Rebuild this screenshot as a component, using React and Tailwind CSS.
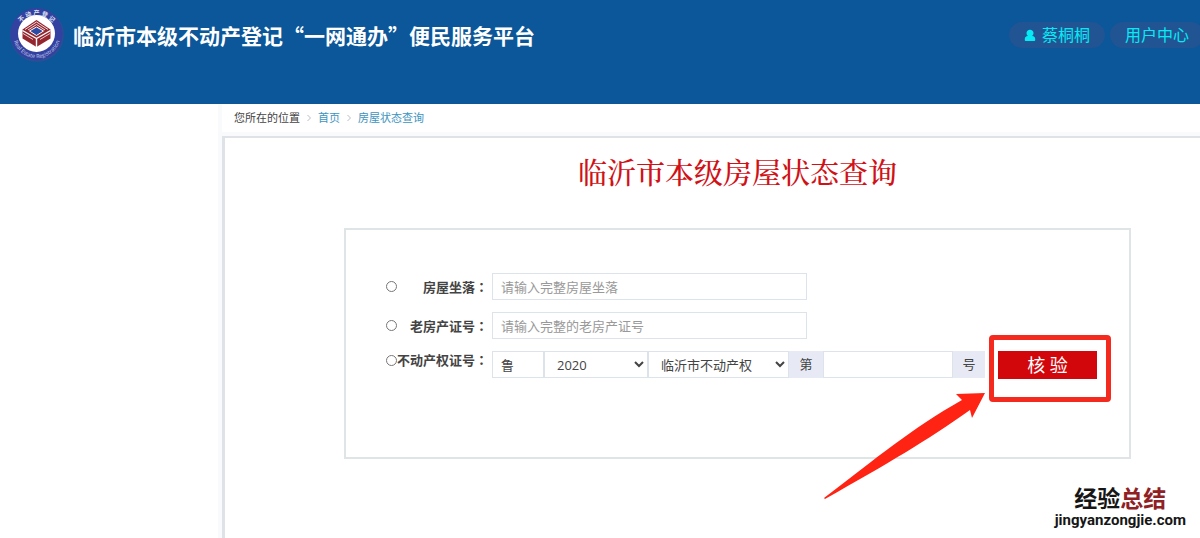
import React from "react";

function Emblem() {
  return (
    <svg viewBox="0 0 56 56" className="size-14 shrink-0" role="img" aria-label="不动产登记">
      <defs>
        <path id="arcTop" d="M7.5 28 A20 20 0 0 1 47.5 28" />
        <path id="arcBottom" d="M3.800 27 A24 24 0 0 0 51.800 27" />
      </defs>
      <circle cx="28" cy="28" r="27" fill="#2a4f96" />
      <circle cx="27.500" cy="27" r="26" fill="#3341a0" />
      <circle cx="27.500" cy="26.500" r="18.500" fill="#fff" />
      <text fontSize="6" fontWeight="700" fill="#dfe3f5" textAnchor="middle">
        <textPath href="#arcTop" startOffset="50%">不 动 产 登 记</textPath>
      </text>
      <text fontSize="5.500" fill="#c3cbea" textAnchor="middle">
        <textPath href="#arcBottom" startOffset="50%">Real Estate Registration</textPath>
      </text>
      <path d="M27.500 13 41.500 22.500 V31.500 L27.500 40 13.500 31.500 V22.500Z" fill="#94262f" />
      <path d="M13.500 23.500 27.500 31.500 41.500 23.500 M27.500 31.500 V40" stroke="#fff" strokeWidth="1.400" fill="none" />
      <path d="M14 26.500 24 32.500 M41 26.500 31 32.500" stroke="#e9c9cc" strokeWidth="1" />
      <path d="M16 22.500 27.500 15 39 22.500 M19 23 27.500 17.500 36 23" stroke="#f1dcdd" strokeWidth="1" fill="none" />
      <path d="M20.500 24 27.500 20 34.500 24 27.500 28.500Z" fill="#2b4ba5" stroke="#fff" strokeWidth="1" />
    </svg>
  );
}

function UserIcon() {
  return (
    <svg viewBox="0 0 12 13" className="h-[13px] w-3" fill="currentColor" aria-hidden="true">
      <path d="M6 .8c2 0 3.500 1.300 3.500 3.200C9.500 5.300 8.900 6.300 8.200 6.900 10.300 7 11.200 8.200 11.200 10v.9c0 .7-.5 1.100-1.200 1.100H2C1.300 12 .8 11.600 .8 10.900V10c0-1.800.9-3 3-3.100C3.100 6.300 2.500 5.300 2.500 4 2.500 2.100 4 .8 6 .8Z" />
    </svg>
  );
}

function Crumb() {
  return (
    <svg viewBox="0 0 4 8" className="h-2 w-1" fill="none" stroke="#b9bec4" aria-hidden="true">
      <path d="M.5 1 3.500 4 .5 7" />
    </svg>
  );
}

const field =
  "h-[27px] min-w-0 border border-[#dde3ea] bg-white text-[13px] text-[#444] outline-none placeholder:text-[#999]";

function Choice({ id, text }) {
  return (
    <div className="flex w-[102px] shrink-0 items-center justify-between">
      <input id={id} type="radio" name="kind" className="-mr-1 size-[11px] shrink-0" />
      <label htmlFor={id} className="text-[13px] leading-[18px] font-bold whitespace-nowrap text-[#444]">
        {text}
        <span className="font-['Noto_Sans_CJK_TC',sans-serif]" lang="zh-TW">：</span>
      </label>
    </div>
  );
}

function SearchRow({ id, text, hint }) {
  return (
    <div className="flex items-center gap-1">
      <Choice id={id} text={text} />
      <input type="text" aria-label={text} placeholder={hint} className={`${field} w-[315px] px-2`} />
    </div>
  );
}

export default function App() {
  return (
    <div className="flex min-h-screen flex-col overflow-x-hidden bg-white font-['Open_Sans','Noto_Sans_CJK_SC',sans-serif]">
      <header className="flex h-[104px] items-start justify-between bg-[#0b5799]">
        <div className="flex items-center gap-2 pt-[7px] pl-[9px]">
          <Emblem />
          <h1 className="font-['Noto_Sans_CJK_SC',sans-serif] text-[21px] leading-7 font-bold whitespace-nowrap text-white">
            临沂市本级不动产登记“一网通办”便民服务平台
          </h1>
        </div>
        <nav className="-mr-1 flex gap-[5px] pt-[22px] text-base leading-[26px] whitespace-nowrap text-[#06eaf5]">
          <a href="#user" className="flex items-center gap-1.5 rounded-full bg-[#215493] px-[15px]">
            <UserIcon />
            蔡桐桐
          </a>
          <a href="#center" className="rounded-full bg-[#215493] px-[15px]">
            用户中心
          </a>
        </nav>
      </header>

      <div className="flex flex-1">
        <aside className="w-[218px] shrink-0" />
        <div className="flex min-w-0 flex-1 flex-col bg-[#f8fafc] pl-1">
          <nav className="mb-1 flex h-7 items-center gap-[7px] bg-white pl-3 text-[11px] text-[#444]">
            <span>您所在的位置</span>
            <Crumb />
            <a href="#home" className="text-[#3d94c0]">首页</a>
            <Crumb />
            <a href="#query" className="text-[#3d94c0]">房屋状态查询</a>
          </nav>

          <main className="relative flex-1 border-t-2 border-l-[3px] border-[#dfe3e8] bg-white pr-[69px] pl-[119px]">
            <h2 className="pt-3.5 text-center font-['Noto_Serif_CJK_SC','Noto_Sans_CJK_SC',serif] text-[29px] leading-10 font-medium text-[#d01217]">
              临沂市本级房屋状态查询
            </h2>
            <form className="mt-9 flex flex-col gap-3 border-2 border-[#dfe4e6] pt-[43px] pr-8 pb-[78px] pl-10">
              <SearchRow id="seat" text="房屋坐落" hint="请输入完整房屋坐落" />
              <SearchRow id="old" text="老房产证号" hint="请输入完整的老房产证号" />
              <div className="flex items-start gap-1">
                <Choice id="cert" text="不动产权证号" />
                <div className="flex min-w-0 flex-1">
                  <input type="text" aria-label="省份" defaultValue="鲁" className={`${field} w-[52px] px-2`} />
                  <select aria-label="年份" defaultValue="2020" className={`${field} w-[104px] shrink-0 pl-2`}>
                    <option>2020</option>
                  </select>
                  <select aria-label="证书类型" className={`${field} w-[141px] shrink-0 pl-2`}>
                    <option>临沂市不动产权</option>
                  </select>
                  <label htmlFor="number" className="flex h-[27px] w-[34px] shrink-0 items-center justify-center bg-[#e7eaf5] text-[13px] text-[#444]">
                    第
                  </label>
                  <input id="number" type="text" className={`${field} w-0 flex-1 px-2`} />
                  <span className="flex h-[27px] w-8 shrink-0 items-center justify-center bg-[#e7eaf5] text-[13px] text-[#444]">
                    号
                  </span>
                </div>
                <div className="relative ml-[9px] shrink-0">
                  <button type="button" className="block h-7 w-[99px] bg-[#d2070c] text-lg leading-7 text-white">
                    核 验
                  </button>
                  <div className="pointer-events-none absolute -top-4 -right-[14px] -bottom-[23px] -left-[9px] rounded-[4px] border-5 border-[#f42a1f]" />
                  <svg viewBox="0 0 162 110" className="pointer-events-none absolute top-10 right-[111px] h-[110px] w-[162px]" aria-hidden="true">
                    <path d="M161 2 148 27 146 19 C102 50 65 72 1 108 L0 107 C54 66 87 38 138 9 L132 3Z" fill="#ff2314" />
                  </svg>
                </div>
              </div>
            </form>
            <div className="absolute right-[14px] bottom-2.5 flex flex-col items-center font-bold whitespace-nowrap text-[#161616]">
              <span className="text-[23px] leading-7">
                经验<span className="text-[#8f2024]">总结</span>
              </span>
              <span className="font-['Roboto',sans-serif] text-[15px] leading-4">jingyanzongjie.com</span>
            </div>
          </main>
        </div>
      </div>
    </div>
  );
}
